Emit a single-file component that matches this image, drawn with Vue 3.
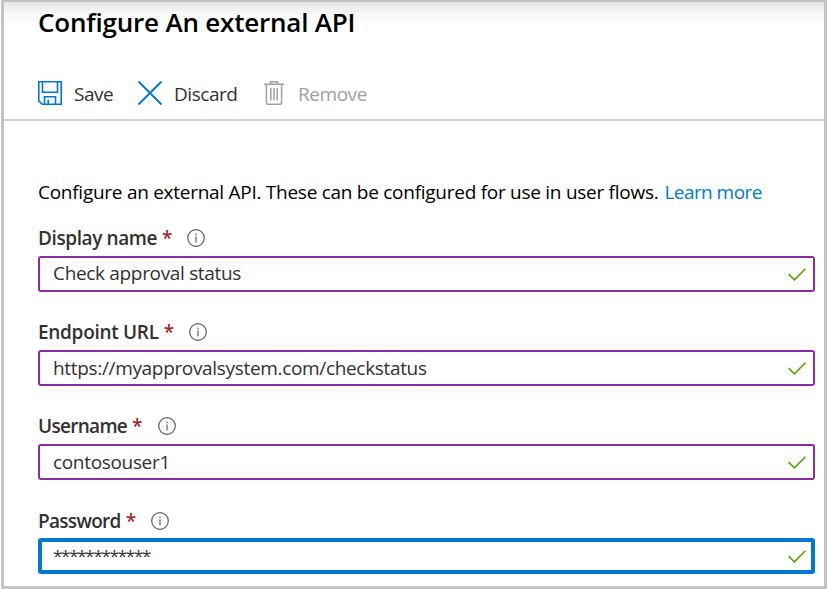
<script setup>
const fields = [
  { id: 'display-name', label: 'Display name', value: 'Check approval status' },
  { id: 'endpoint', label: 'Endpoint URL', value: 'https://myapprovalsystem.com/checkstatus' },
  { id: 'username', label: 'Username', value: 'contosouser1' },
  { id: 'password', label: 'Password', value: '************', focused: true },
]
</script>

<template>
  <main class="panel">
    <header class="top">
      <h1 class="title">Configure An external API</h1>
      <div class="toolbar">
        <button class="tool save">
          <svg width="24" height="24" viewBox="0 0 24 24" fill="none" stroke="#0078d4" stroke-width="1.6">
            <path d="M.8.8h22.4v22.4H4.2L.8 19.8zM4.5.8v10.4h15V.8M6.5 23v-7.2h11V23M10.2 23v-4.2" />
          </svg>
          <span>Save</span>
        </button>
        <button class="tool discard">
          <svg width="24" height="24" viewBox="0 0 24 24" fill="none" stroke="#0078d4" stroke-width="1.9">
            <path d="M.5.5l23 23M23.5.5l-23 23" />
          </svg>
          <span>Discard</span>
        </button>
        <button class="tool remove" disabled>
          <svg width="20" height="24" viewBox="0 0 20 24" fill="none" stroke="#a19f9d" stroke-width="1.5">
            <path d="M0 3.2h20M6.5 3V.8h7V3M2.4 3.5v18.2q0 1.5 1.5 1.5h12.2q1.5 0 1.5-1.5V3.5M6.8 7v12.5M10 7v12.5M13.2 7v12.5" />
          </svg>
          <span>Remove</span>
        </button>
      </div>
    </header>
    <section class="content">
      <p class="intro">
        <span>Configure an external API. These can be configured for use in user flows.</span>
        <a class="link">Learn more</a>
      </p>
      <div v-for="f in fields" :key="f.id" class="field" :class="f.id">
        <div class="label">
          <span class="name">{{ f.label }}</span>
          <span class="star">*</span>
          <svg class="info" width="18" height="18" viewBox="0 0 18 18" fill="none" stroke="#605e5c">
            <circle cx="9" cy="9" r="8.3" stroke-width="1.2" />
            <path d="M9 7.5v6M9 4.6v1.6" stroke-width="1.2" />
          </svg>
        </div>
        <div class="box" :class="{ focused: f.focused }">
          <span class="value">{{ f.value }}</span>
          <svg class="check" width="18" height="13" viewBox="0 0 18 13" fill="none" stroke="#57a300" stroke-width="1.6">
            <path d="M.6 6.2l5.8 5.6L17.4.7" />
          </svg>
        </div>
      </div>
    </section>
  </main>
</template>

<style>
body { background: #fff; }
</style>

<style scoped>
.panel {
  box-sizing: border-box;
  height: 589px;
  margin-left: 1px;
  border: 3px solid #c3c3c3;
  border-top-width: 2px;
  background: linear-gradient(#e6e6e6, #f8f8f8 12px, #fff 24px);
  font-family: "Open Sans", "Noto Sans", sans-serif;
  font-size: 19px;
  letter-spacing: -0.33px;
  color: #323130;
  overflow: hidden;
  white-space: nowrap;
}
.top {
  box-sizing: border-box;
  height: 119px;
  padding-left: 34px;
  border-bottom: 2px solid #d4d4d4;
}
.title {
  margin: 0;
  height: 42px;
  line-height: 41px;
  font-size: 26px;
  font-weight: 600;
  color: #000;
  letter-spacing: -0.2px;
}
.toolbar { display: flex; height: 24px; margin-top: 37px; }
.tool {
  display: flex;
  align-items: center;
  gap: 12px;
  height: 24px;
  padding: 0;
  border: 0;
  background: none;
  font: inherit;
  letter-spacing: -0.45px;
  line-height: 24px;
  color: inherit;
}
.tool svg { flex: none; overflow: visible; }
.tool span { padding-top: 2px; }
.save { width: 100px; }
.discard { width: 126px; }
.remove { gap: 14px; color: #a19f9d; }
.content { padding: 57px 9px 0 34px; }
.intro {
  display: flex;
  gap: 6px;
  height: 30px;
  margin: 0;
  line-height: 28px;
  letter-spacing: -0.27px;
  color: #000;
}
.link { color: #0078d4; letter-spacing: -0.55px; }
.field { height: 94px; }
.label {
  box-sizing: border-box;
  display: flex;
  align-items: center;
  height: 48px;
  padding-top: 12px;
  font-weight: 600;
  letter-spacing: -0.4px;
}
.endpoint .label { letter-spacing: -0.3px; }
.username .label { letter-spacing: -0.7px; }
.password .label { padding-top: 13px; letter-spacing: -0.7px; }
.star { margin-left: 5px; color: #a4262c; }
.info { margin-left: 15px; }
.username .info, .password .info { margin-left: 16px; }
.box {
  box-sizing: border-box;
  display: flex;
  align-items: center;
  justify-content: space-between;
  height: 36px;
  padding: 0 7px 0 13px;
  border: 2px solid #8a2da5;
  border-radius: 3px;
  background: #fff;
}
.display-name .value { padding-bottom: 2px; }
.focused { border: 4px solid #0078d4; padding: 0 5px 0 11px; }
.focused .value { padding-bottom: 2px; font-size: 17px; letter-spacing: -1.27px; }
</style>
